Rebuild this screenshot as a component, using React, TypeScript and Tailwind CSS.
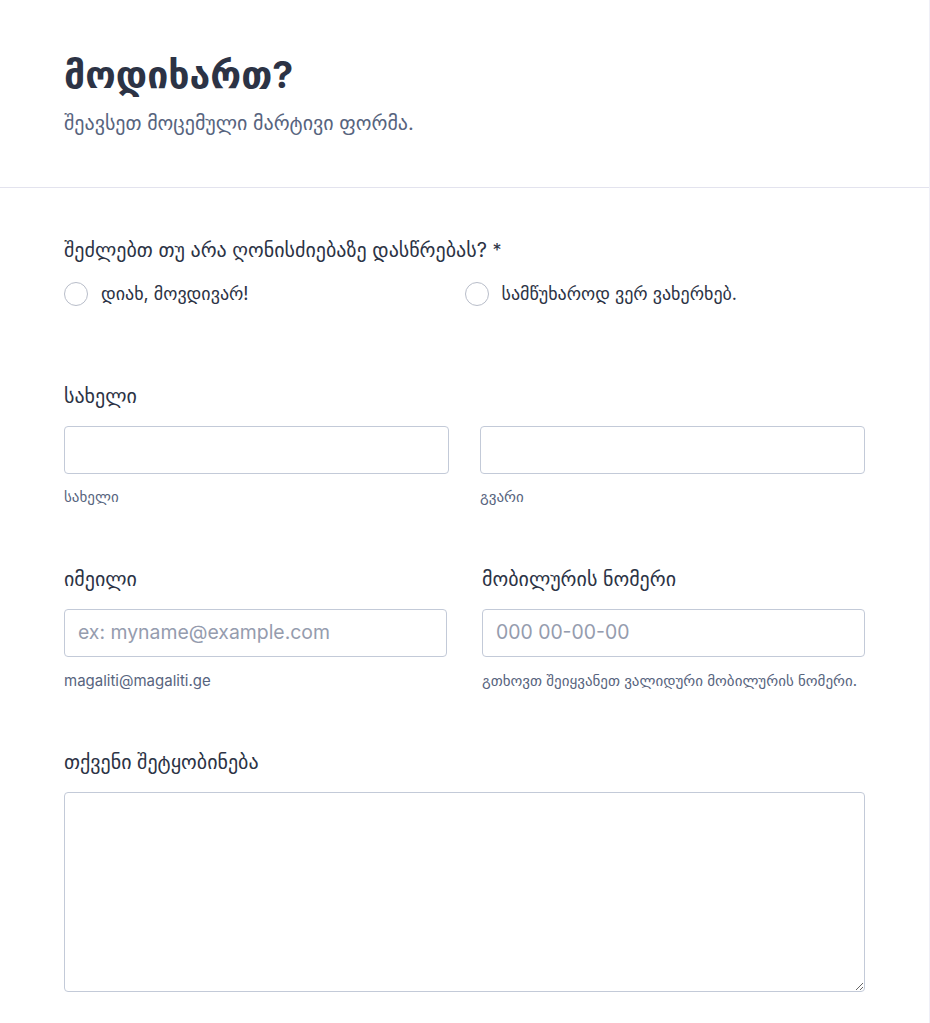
import React from "react";

const font = { fontFamily: "Inter, 'DejaVu Sans', 'Noto Sans', sans-serif" };

function Radio({ label }: { label: string }) {
  return (
    <label className="flex items-center gap-[13px]">
      <span className="w-6 h-6 rounded-full border border-[#b8bdc9] bg-white shrink-0" />
      <span className="text-[18px] leading-6 text-[#2c3345]">{label}</span>
    </label>
  );
}

export default function App() {
  return (
    <div className="min-h-screen bg-white border-r border-[#efeff7]" style={font}>
      <div className="px-16 pt-[51px] pb-[52px] border-b border-[#e3e3ee]">
        <h1 className="text-[37.5px] leading-[48px] font-bold text-[#2c3345]">მოდიხართ?</h1>
        <p className="mt-[12px] text-[20px] leading-6 text-[#57647e]">შეავსეთ მოცემული მარტივი ფორმა.</p>
      </div>
      <div className="px-16 pt-[50px]">
        <div className="text-[20px] leading-6 text-[#2c3345]">
          შეძლებთ თუ არა ღონისძიებაზე დასწრებას? <span className="text-[#2c3345] text-[18px]">*</span>
        </div>
        <div className="grid grid-cols-2 mt-[19px]">
          <Radio label="დიახ, მოვდივარ!" />
          <Radio label="სამწუხაროდ ვერ ვახერხებ." />
        </div>

        <div className="mt-[78px] text-[20px] leading-6 text-[#2c3345]">სახელი</div>
        <div className="flex justify-between mt-[18px]">
          <div className="w-[385px]">
            <div className="h-12 rounded border border-[#c3cad8] bg-white" />
            <div className="mt-[14px] text-[15px] leading-[18px] text-[#57647e]">სახელი</div>
          </div>
          <div className="w-[385px]">
            <div className="h-12 rounded border border-[#c3cad8] bg-white" />
            <div className="mt-[14px] text-[15px] leading-[18px] text-[#57647e]">გვარი</div>
          </div>
        </div>

        <div className="flex justify-between mt-[61px]">
          <div className="w-[383px]">
            <div className="text-[20px] leading-6 text-[#2c3345]">იმეილი</div>
            <div className="mt-[18px] h-12 rounded border border-[#c3cad8] bg-white flex items-center px-[13px] text-[19.4px] text-[#959cae]">
              ex: myname@example.com
            </div>
            <div className="mt-[15px] text-[15px] leading-[18px] text-[#57647e]">magaliti@magaliti.ge</div>
          </div>
          <div className="w-[383px]">
            <div className="text-[20px] leading-6 text-[#2c3345]">მობილურის ნომერი</div>
            <div className="mt-[18px] h-12 rounded border border-[#c3cad8] bg-white flex items-center px-[13px] text-[19.4px] text-[#959cae]">
              000 00-00-00
            </div>
            <div className="mt-[15px] text-[15px] leading-[18px] text-[#57647e]">გთხოვთ შეიყვანეთ ვალიდური მობილურის ნომერი.</div>
          </div>
        </div>

        <div className="mt-[60px] text-[20px] leading-6 text-[#2c3345]">თქვენი შეტყობინება</div>
        <textarea className="mt-[18px] block w-full h-[200px] rounded border border-[#c3cad8] bg-white" />
        <div className="h-[30px]" />
      </div>
    </div>
  );
}
